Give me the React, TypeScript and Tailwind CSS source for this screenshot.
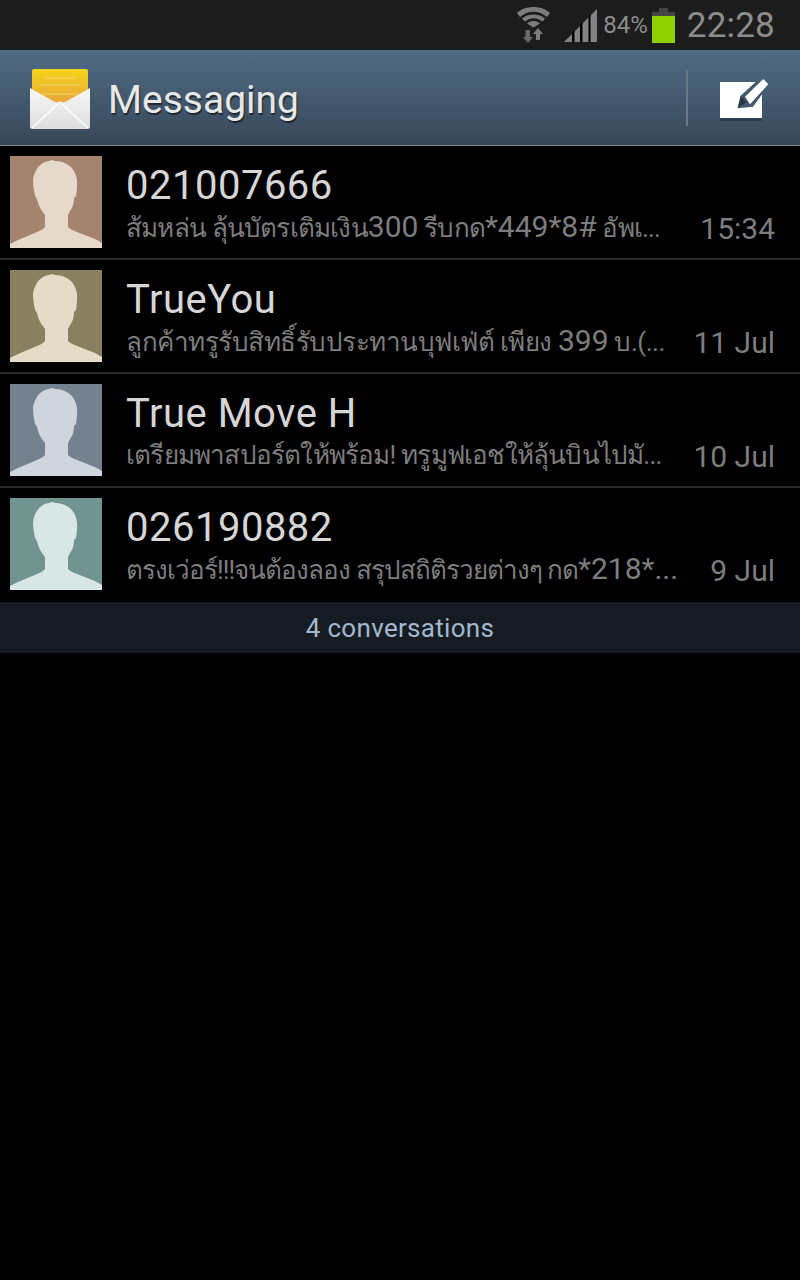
import React from 'react';

// preview parts alternate: thai run, latin run, thai run... the latin runs are set larger
const conversations = [
  { name: '021007666', preview: ['ส้มหล่น ลุ้นบัตรเติมเงิน', '300', ' รีบกด', '*449*8#', ' อัพเ...'], thai: 'tracking-[-0.8px]', time: '15:34', bg: '#a5846f', fg: '#e6d8ca' },
  { name: 'TrueYou', preview: ['ลูกค้าทรูรับสิทธิ์รับประทานบุฟเฟ่ต์ เพียง ', '399', ' บ.(...'], thai: 'tracking-[-0.5px]', time: '11 Jul', bg: '#88805f', fg: '#e4dcc6' },
  { name: 'True Move H', preview: ['เตรียมพาสปอร์ตให้พร้อม! ทรูมูฟเอชให้ลุ้นบินไปมั...'], thai: 'tracking-[-0.8px]', time: '10 Jul', bg: '#74828f', fg: '#cfd5dc' },
  { name: '026190882', preview: ['ตรงเว่อร์!!!จนต้องลอง สรุปสถิติรวยต่างๆ กด', '*218*...'], thai: 'tracking-[-1px]', time: '9 Jul', bg: '#729490', fg: '#d8e6e5' },
];

const Avatar = ({ bg, fg }: { bg: string; fg: string }) => (
  <svg width="92" height="92" viewBox="0 0 92 92" className="shrink-0">
    <rect width="92" height="92" fill={bg} />
    <path
      fill={fg}
      d="M43 4 L45 5 C52 5 60 8 64 15 C67 20 67.500 26 67 31 C66.500 35 66.500 38 66 40 L64 42 C64 47 63 51 60 55 L58 59 L58 71 C60 73 64 75 67 76 L85 83 L92 87 V92 H0 V88 L8 84 L27 76 C31 74 34 73 35 71 L35 59 L32 55 C29 51 28 47 27 43 L25 40 C24 35 23 30 23 24 C24 16 28 10 33 7 C36 5 40 5 43 4 Z"
    />
  </svg>
);

const EnvelopeIcon = () => (
  <svg width="62" height="62" viewBox="0 0 62 62" className="shrink-0">
    <defs>
      <linearGradient id="flap" x1="0" y1="0" x2="0" y2="1">
        <stop offset="0" stopColor="#f6d41a" />
        <stop offset="1" stopColor="#e9a53c" />
      </linearGradient>
      <linearGradient id="env" x1="0" y1="0" x2="0" y2="1">
        <stop offset="0" stopColor="#f8f8f6" />
        <stop offset="1" stopColor="#dcdedd" />
      </linearGradient>
    </defs>
    <path d="M3 3 Q3 1 5 1 L57 1 Q59 1 59 3 L59 36 L3 36 Z" fill="url(#flap)" />
    <path d="M16 10 H46 M11 17 H51 M14 26 H48" stroke="#f8e08a" strokeWidth="1" opacity="0.8" />
    <path d="M1 20 L24 33 Q31 36 38 33 L61 20 L61 59 Q61 61 59 61 L3 61 Q1 61 1 59 Z" fill="url(#env)" />
    <path d="M3 60 L31 34 L59 60" fill="none" stroke="#ffffff" strokeWidth="1.500" />
  </svg>
);

const ComposeIcon = () => (
  <svg width="54" height="46" viewBox="0 0 54 46" className="shrink-0">
    <path d="M4 6 H46 V43 H4 Z" fill="#1f2b38" opacity="0.55" />
    <path d="M4 4 H46 V40 H4 Z" fill="#ffffff" />
    <path d="M21.700 30.300 L24.700 17.700 L40.700 3 L47 3 L47 15 L37 28.700 Z" fill="#45586b" />
    <path d="M21.700 30.300 L24.700 17.700 L31 24 Z" fill="#2b3a49" />
    <path d="M29 18.700 L47.300 1 L52.300 6.300 L34 26.300 Z" fill="#ffffff" />
  </svg>
);

const WifiIcon = () => (
  <svg width="34" height="50" viewBox="0 0 34 50">
    <path d="M0 13 C8 5 25 5 33 13 L30 17 C22 10 11 10 3 17 Z" fill="#7d7d7d" />
    <path d="M5 18.500 C11 13 22 13 28 18.500 L25.500 21.500 C20 17 13 17 8 21.500 Z" fill="#7d7d7d" />
    <path d="M10 23.500 C13 20 20 20 23 23.500 L16.500 27.500 Z" fill="#7d7d7d" />
    <path d="M8.500 30 H13 V37 H16 L11 43 L6 37 H8.500 Z" fill="#686868" />
    <path d="M21 28 L26 34 H23 V40 H19 V34 H16 Z" fill="#7d7d7d" />
  </svg>
);

const SignalIcon = () => (
  <svg width="34" height="34" viewBox="0 0 34 34">
    <path d="M0 34 L33 1 V34 Z" fill="#828282" />
    <path d="M8 34 V25 L10.500 22.500 V34 Z M16 34 V17 L18.500 14.500 V34 Z M24.500 34 V8.500 L26.500 6.500 V34 Z" fill="#000000" />
  </svg>
);

const BatteryIcon = () => (
  <div className="flex w-[23px] flex-col items-center">
    <div className="h-[4px] w-[9px] bg-[#444444]" />
    <div className="h-[4px] w-full bg-[#444444]" />
    <div className="h-[27px] w-full bg-[#90d000]" />
  </div>
);

export default function App() {
  return (
    <div className="min-h-[1280px] w-[800px] bg-black font-['Roboto','Noto_Sans','DejaVu_Sans',sans-serif]">
      {/* Status bar */}
      <div className="flex h-[50px] items-center justify-end bg-[#1c1c1c] pr-[25px] text-[#8c8c8c]">
        <WifiIcon />
        <div className="ml-[13px]"><SignalIcon /></div>
        <span className="ml-[5px] text-[24px] leading-none">84%</span>
        <div className="ml-[4px]"><BatteryIcon /></div>
        <span className="ml-[12px] text-[35px] leading-none tracking-[0.2px]">22:28</span>
      </div>

      {/* Action bar */}
      <div className="flex h-[96px] items-center border-b border-[#7c8a95] bg-gradient-to-b from-[#506b84] to-[#384859] pl-[29px] pt-[1px]">
        <div className="mt-[2px]"><EnvelopeIcon /></div>
        <span className="ml-[17px] mt-[5px] text-[39px] leading-none text-[#e8e8e8] [text-shadow:1px_2px_1px_rgba(0,0,0,0.55)]">Messaging</span>
        <div className="ml-auto h-[56px] w-[2px] bg-[#68798a]" />
        <div className="ml-[28px] mr-[30px] mt-[5px]"><ComposeIcon /></div>
      </div>

      {/* Conversation list */}
      <div>
        {conversations.map((c, i) => (
          <div
            key={c.name}
            className={`flex h-[114px] items-start pl-[10px] pt-[10px] ${i < 3 ? 'border-b-2 border-[#2a2a2a]' : ''}`}
          >
            <Avatar bg={c.bg} fg={c.fg} />
            <div className="ml-[24px] min-w-0 flex-1 pr-[25px]">
              <div className="mt-[8px] text-[40px] leading-[44px] tracking-[0.5px] text-[#d6d6d6]">{c.name}</div>
              <div className="flex items-start">
                <span className={`mt-[1px] min-w-0 flex-1 text-[26px] leading-[36px] whitespace-nowrap text-[#7d7d7d] ${c.thai}`}>
                  {c.preview.map((part, idx) =>
                    idx % 2 ? <span key={idx} className="text-[30px] tracking-normal">{part}</span> : part
                  )}
                </span>
                <span className="mt-[3px] shrink-0 pl-2 text-[30px] leading-[36px] text-[#7d7d7d]">{c.time}</span>
              </div>
            </div>
          </div>
        ))}
      </div>

      {/* Footer count */}
      <div className="flex h-[51px] items-center justify-center bg-[#161b23] pt-[1px] text-[26px] tracking-[0.3px] text-[#a3b8cd]">
        4 conversations
      </div>
    </div>
  );
}
